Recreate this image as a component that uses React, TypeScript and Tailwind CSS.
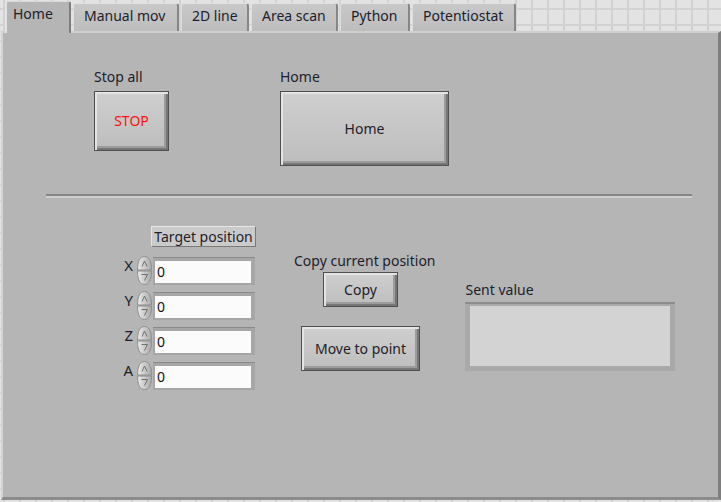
import React from 'react'

const tabs = [
  { label: 'Manual mov', w: 'w-[106px]' },
  { label: '2D line', w: 'w-[68px]' },
  { label: 'Area scan', w: 'w-[87px]' },
  { label: 'Python', w: 'w-[70px]' },
  { label: 'Potentiostat', w: 'w-[104px]' },
]

const LvButton = ({ className, children }: { className: string; children: React.ReactNode }) => (
  <div
    className={`flex items-center justify-center border border-[#4f4f4f] bg-linear-to-b from-[#cfcfcf] to-[#bdbdbd] shadow-[inset_2px_2px_0_#e4e4e4,inset_-2px_-2px_0_#767676,inset_-4px_-4px_0_#9c9c9c] ${className}`}
  >
    {children}
  </div>
)

// little up/down arrows beside a numeric control
const Spin = () => (
  <svg width="17" height="29" viewBox="0 0 17 29" className="shrink-0">
    <defs>
      <linearGradient id="spinFill" x1="0" x2="1" y1="0" y2="0">
        <stop offset="0" stopColor="#ececec" />
        <stop offset="1" stopColor="#a9a9a9" />
      </linearGradient>
    </defs>
    <path d="M1.5 14 C1.5 5 4 0.5 8.5 0.5 C13 0.5 15.5 5 15.5 14 Z" fill="url(#spinFill)" stroke="#8f8f8f" />
    <path d="M1.5 15 C1.5 24 4 28.5 8.5 28.5 C13 28.5 15.5 24 15.5 15 Z" fill="url(#spinFill)" stroke="#8f8f8f" />
    <path d="M6 10.5 L8.5 5 L11 10.5" fill="none" stroke="#6f6f6f" strokeWidth="1" />
    <path d="M5.5 18.5 L11.5 18.5 L8.5 24.5" fill="none" stroke="#6f6f6f" strokeWidth="1" />
  </svg>
)

const NumRow = ({ name }: { name: string }) => (
  <div className="flex h-[29px] items-start">
    <span className="mt-[1px] w-[18px] pr-[3px] text-right text-[15px]">{name}</span>
    <Spin />
    <div className="mt-[1px] h-[28px] w-[102px] border-t border-[#8a8a8a] bg-[#a6a6a6] pt-[3px] pr-[4px] pb-[2px] pl-[2px]">
      <div className="h-full bg-[#fbfbfb] pl-[2px] text-[#111] leading-[22px]">0</div>
    </div>
  </div>
)

export default function App() {
  return (
    <div className="flex h-[502px] w-[721px] flex-col bg-[#e3e3e3] bg-[linear-gradient(to_right,#d2d2d2_2px,transparent_2px),linear-gradient(to_bottom,#d2d2d2_2px,transparent_2px)] bg-[length:16px_16px] bg-[position:3px_8px] font-['Noto_Sans',sans-serif] text-[14px] leading-[16px] text-[#1d1d2b]">
      {/* tab strip */}
      <div className="flex h-[31px] shrink-0 items-end pl-[5px]">
        <div className="relative z-10 mb-[-2px] h-[32px] w-[66px] rounded-t-[3px] border-l-2 border-r-2 border-t border-l-[#e2e2e2] border-r-[#7d7d7d] border-t-[#dadada] bg-[#b5b5b5] pl-[6px] pt-[4px]">
          Home
        </div>
        {tabs.map((t) => (
          <div
            key={t.label}
            className={`ml-[2px] h-[28px] ${t.w} rounded-t-[3px] border-l border-r-2 border-t border-l-[#dedede] border-r-[#868686] border-t-[#e0e0e0] bg-linear-to-b from-[#c8c8c8] to-[#bdbdbd] pl-[10px] pt-[4px]`}
          >
            {t.label}
          </div>
        ))}
      </div>

      {/* panel */}
      <div className="mb-[2px] ml-[1px] flex flex-1 flex-col border-b-[3px] border-l-2 border-r-[3px] border-t-2 border-b-[#8c8c8c] border-l-[#d4d4d4] border-r-[#7e7e7e] border-t-[#cfcfcf] bg-[#b5b5b5]">
        <div className="mt-[36px] flex pl-[91px]">
          <div className="flex flex-col">
            <span>Stop all</span>
            <LvButton className="mt-[6px] h-[60px] w-[75px] text-[#ff1010]">STOP</LvButton>
          </div>
          <div className="ml-[111px] flex flex-col">
            <span>Home</span>
            <LvButton className="mt-[6px] h-[75px] w-[169px]">Home</LvButton>
          </div>
        </div>

        {/* divider */}
        <div className="ml-[43px] mt-[28px] w-[646px]">
          <div className="h-[2px] bg-[#858585]" />
          <div className="h-[2px] bg-[#cdcdcd]" />
        </div>

        <div className="flex items-start pl-[115px]">
          <div className="mt-[28px] flex flex-col">
            <div className="ml-[33px] flex h-[21px] w-[105px] items-center justify-center border border-b-[#7a7a7a] border-l-[#e6e6e6] border-r-[#7a7a7a] border-t-[#e6e6e6] bg-[#cacaca]">
              Target position
            </div>
            <div className="mt-[9px] flex flex-col gap-[6px]">
              <NumRow name="X" />
              <NumRow name="Y" />
              <NumRow name="Z" />
              <NumRow name="A" />
            </div>
          </div>

          <div className="ml-[38px] mt-[55px] flex flex-col">
            <span>Copy current position</span>
            <LvButton className="ml-[29px] mt-[3px] h-[35px] w-[75px]">Copy</LvButton>
            <LvButton className="ml-[7px] mt-[19px] h-[45px] w-[119px]">Move to point</LvButton>
          </div>

          <div className="ml-[29px] mt-[84px] flex flex-col">
            <span className="pl-[1px]">Sent value</span>
            <div className="mt-[4px] h-[69px] w-[210px] border-t-2 border-t-[#8e8e8e] bg-[#a9a9a9] px-[5px] pb-[5px] pt-[2px]">
              <div className="h-full bg-[#d3d3d3]" />
            </div>
          </div>
        </div>
      </div>
    </div>
  )
}
